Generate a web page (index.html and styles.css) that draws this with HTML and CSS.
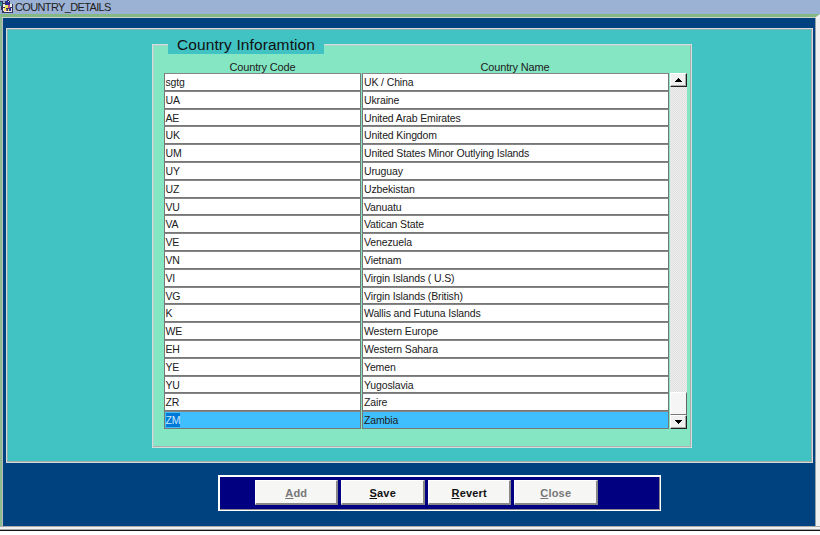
FILE: index.html
```html
<!DOCTYPE html>
<html lang="en">
<head>
<meta charset="utf-8">
<title>COUNTRY_DETAILS</title>
<link rel="stylesheet" href="styles.css">
</head>
<body>
<header class="titlebar">
<svg class="app-icon" width="14" height="14" viewBox="0 0 14 14" shape-rendering="crispEdges"><path fill="#34345c" d="M0 1h3v2h2V1h2V0h2v1h1v3h3v9H2v-3H1V6H0z"/><path fill="#eee" d="M3 4h2v3H3zM10 4h2v3h-2zM4 11h7v1H4zM3 8h1v3H3z"/><path fill="#328e91" d="M0 2h2v4H0z"/><path fill="#28269a" d="M6 1h3v4H6zM9 8h2v3H9z"/><path fill="#eee35b" d="M5 5h3v3H6v3H4V8h1zM8 9h1v2H8z"/><path fill="#b6508a" d="M8 5h2v3H8zM6 9h1v2H6z"/><path fill="#ddd" d="M11 8h1v4h-1zM8 1h1v1H8z"/></svg>
<span class="window-name">COUNTRY_DETAILS</span>
</header>
<main class="window">
<section class="canvas">
<div class="group">
<h1 class="group-title"><span>Country Inforamtion</span></h1>
<div class="headings"><span>Country Code</span><span>Country Name</span></div>
<div class="records">
<div class="rows">
<div class="row"><span>sgtg</span><span>UK / China</span></div>
<div class="row"><span>UA</span><span>Ukraine</span></div>
<div class="row"><span>AE</span><span>United Arab Emirates</span></div>
<div class="row"><span>UK</span><span>United Kingdom</span></div>
<div class="row"><span>UM</span><span>United States Minor Outlying Islands</span></div>
<div class="row"><span>UY</span><span>Uruguay</span></div>
<div class="row"><span>UZ</span><span>Uzbekistan</span></div>
<div class="row"><span>VU</span><span>Vanuatu</span></div>
<div class="row"><span>VA</span><span>Vatican State</span></div>
<div class="row"><span>VE</span><span>Venezuela</span></div>
<div class="row"><span>VN</span><span>Vietnam</span></div>
<div class="row"><span>VI</span><span>Virgin Islands ( U.S)</span></div>
<div class="row"><span>VG</span><span>Virgin Islands (British)</span></div>
<div class="row"><span>K</span><span>Wallis and Futuna Islands</span></div>
<div class="row"><span>WE</span><span>Western Europe</span></div>
<div class="row"><span>EH</span><span>Western Sahara</span></div>
<div class="row"><span>YE</span><span>Yemen</span></div>
<div class="row"><span>YU</span><span>Yugoslavia</span></div>
<div class="row"><span>ZR</span><span>Zaire</span></div>
<div class="row current"><span><mark>ZM</mark></span><span>Zambia</span></div>
</div>
<div class="scrollbar">
<div class="arrow"><svg width="7" height="4" viewBox="0 0 7 4" shape-rendering="crispEdges"><path d="M3 0h1v1h1v1h1v1h1v1H0V3h1V2h1V1h1z"/></svg></div>
<div class="thumb"></div>
<div class="arrow down"><svg width="7" height="4" viewBox="0 0 7 4" shape-rendering="crispEdges"><path d="M0 0h7v1H6v1H5v1H4v1H3V3H2V2H1V1H0z"/></svg></div>
</div>
</div>
</div>
</section>
<nav class="actions">
<button class="off"><span><u>A</u>dd</span></button>
<button><span><u>S</u>ave</span></button>
<button><span><u>R</u>evert</span></button>
<button class="off"><span><u>C</u>lose</span></button>
</nav>
</main>
</body>
</html>
```
FILE: styles.css
```css
*, *::after { box-sizing: border-box; }
body { margin: 0; width: 820px; height: 535px; overflow: hidden; background: #fff; font-family: "Liberation Sans", Arial, sans-serif; font-size: 11px; color: #202020; }
.titlebar { height: 14px; background: #9cb2d4; display: flex; }
.window-name { margin-left: 1px; line-height: 15px; letter-spacing: -.64px; }
.window { position: relative; height: 516px; background: #004280; border-style: solid; border-width: 3px 4px 0 2px; border-color: #84b984 #f0f0f0 #f0f0f0 #8fb98f; box-shadow: inset 0 1px #ccd1cc, inset 1px 0 #b5bdc0, inset -1px 0 #98a2ab; padding: 11px 3px 0 4px; }
.window::after { content: ""; position: absolute; left: -2px; right: -4px; bottom: 0; height: 4px; background: #f0f0f0; border-top: 1px solid #aaa; border-bottom: 1px solid #aaa; box-shadow: 0 1px #111; }
.canvas { height: 435px; width: 807px; background: #42c3c3; border: 1px solid #d6dada; box-shadow: inset -1px -1px #a2aaaa, inset 1px 1px #83b5b5; padding: 15px 0 0 145px; }
.group { width: 540px; height: 404px; background: #84e6c3; border: 1px solid #d3dfdc; box-shadow: inset -1px -1px #adafae, inset 1px 1px #aed4ca; padding: 1px 0 0 11px; }
.group-title { width: 156px; height: 17px; margin: -9px 0 0 4px; background: #42c3c3; font-size: 15.5px; font-weight: normal; line-height: 16px; letter-spacing: .1px; color: #101010; padding-left: 9px; white-space: nowrap; }
.headings { display: grid; grid-template-columns: 197px 308px; height: 19px; line-height: 13px; padding-top: 7px; text-align: center; letter-spacing: -.15px; }
.records { display: flex; gap: 1px; height: 356px; }
.rows { width: 505px; display: grid; grid-template-rows: repeat(20, 1fr); }
.row { display: grid; grid-template-columns: 197px 307px; gap: 1px; min-height: 0; }
.row > span { background: #fff; border: 1px solid #777; border-top-color: #858585; padding-left: 1px; font-size: 10.5px; letter-spacing: -.13px; line-height: 16px; white-space: nowrap; overflow: hidden; }
.row > span:first-child { padding-left: .5px; }
.current > span { background: #40bfff; }
mark { display: inline-block; height: 14px; line-height: 15px; background: #0078d7; color: #c9eaff; }
.scrollbar { width: 17px; display: flex; flex-direction: column; background: repeating-conic-gradient(#dedede 0 25%, #efefef 0 50%) 0 0 / 2px 2px; }
.arrow { height: 14px; background: #f0f0f0; border: 1px solid #fff; border-right: 1px solid #222; border-bottom: 1px solid #222; box-shadow: inset -1px -1px #aaa; display: flex; align-items: center; justify-content: center; }
.thumb { height: 23px; margin-top: auto; background: #f5f5f5; border: 1px solid #fff; border-right: 1px solid #666; border-bottom: 1px solid #777; }
.actions { width: 443px; height: 36px; margin: 12px 0 0 212px; background: #000080; border: 1px solid #fff; border-width: 2px 1px 1px 2px; box-shadow: inset -1px -1px #888; padding: 3px 0 0 34.5px; display: flex; gap: 3px; }
button { flex: none; width: 83.5px; height: 25px; padding: 1px 0 0 1px; background: #f6f6f5; border: 1px solid #fff; border-right: 2px solid #888; border-bottom: 2px solid #888; font: bold 11px "Liberation Sans", Arial, sans-serif; letter-spacing: .2px; color: #111; }
button.off { color: #777; }
u { text-underline-offset: 1px; }
```
